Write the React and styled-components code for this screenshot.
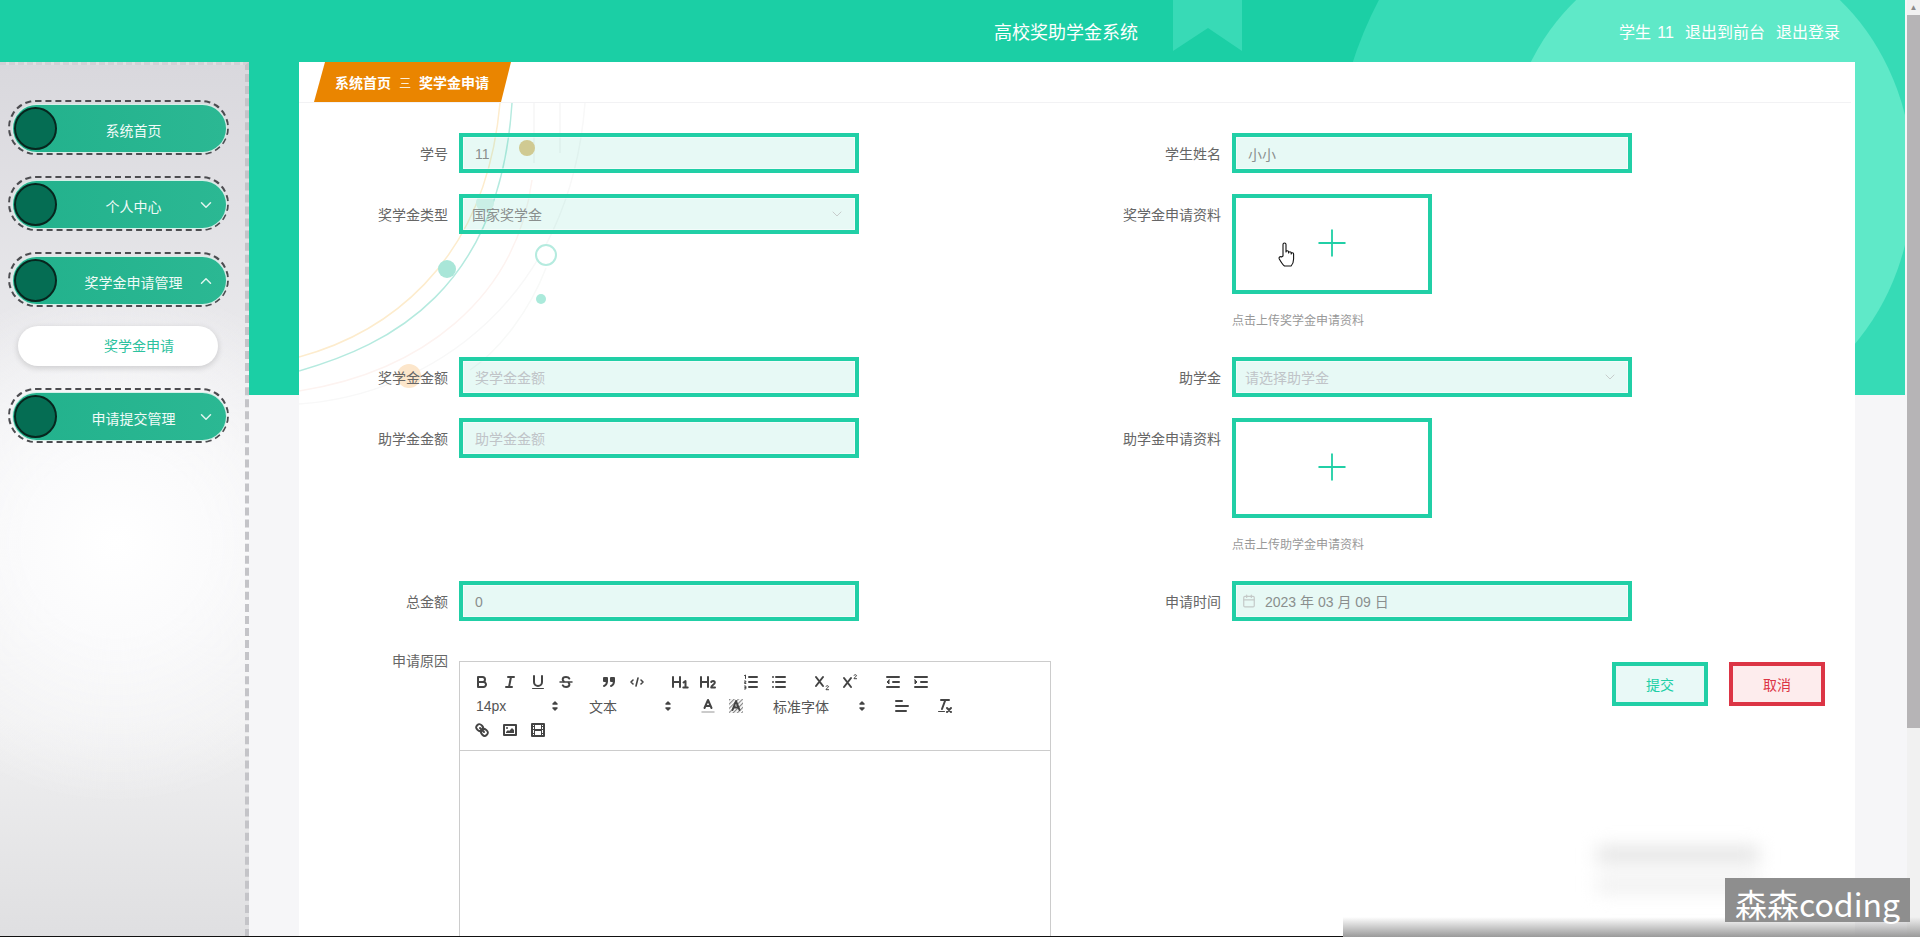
import React from 'react'
import styled, { createGlobalStyle } from 'styled-components'
import { ChevronDown, ChevronUp, Calendar, Plus } from 'lucide-react'

const green = '#21cfa6'
const sans = '"Liberation Sans", "Noto Sans CJK SC", sans-serif'

const GlobalStyle = createGlobalStyle`
  html, body {
    margin: 0;
    padding: 0;
    overflow: hidden;
  }
  * {
    box-sizing: border-box;
  }
`

const Page = styled.div`
  position: relative;
  display: flex;
  width: 1920px;
  height: 937px;
  overflow: hidden;
  background: #f6f6f8;
  font-family: ${sans};
`

const Viewport = styled.div`
  position: relative;
  width: 1905px;
  height: 937px;
`

const BannerArt = styled.svg`
  position: absolute;
  top: 0;
  left: 0;
`

const Header = styled.header`
  position: relative;
  display: flex;
  align-items: center;
  justify-content: space-between;
  height: 62px;
  padding: 0 65px 0 994px;
  color: #fff;
`

const Title = styled.div`
  font-size: 18px;
`

const UserLinks = styled.div`
  display: flex;
  gap: 11px;
  font-size: 16px;
  word-spacing: 2px;
`

const Body = styled.div`
  position: relative;
  display: flex;
  height: 875px;
`

const Sidebar = styled.aside`
  width: 249px;
  padding-top: 35px;
  border-top: 3px dashed #d2d1d6;
  border-right: 4px dashed #c4c4c8;
  background:
    radial-gradient(circle at 116px 478px, #fff 0, #fbfbfc 90px, rgba(255, 255, 255, 0) 260px),
    linear-gradient(#d9d8dd 0, #f0f0f2 45%, #f0f0f1 75%, #dfdfe1 100%);
`

const Nav = styled.nav`
  display: flex;
  flex-direction: column;
  gap: 21px;
`

const MenuFrame = styled.div`
  width: 221px;
  height: 55px;
  margin-left: 8px;
  padding: 3px 1px 1px 3px;
  border: 2px dashed #4c4c50;
  border-radius: 28px;
`

const MenuPill = styled.div`
  position: relative;
  display: flex;
  align-items: center;
  justify-content: center;
  height: 47px;
  padding: 2px 15px 0 43px;
  border-radius: 24px;
  background: linear-gradient(90deg, #22b18c, #2bb893);
  box-shadow: 0 0 0 1px #d4f0e8;
  color: #f1fbf8;
  font-size: 14px;
`

const MenuDot = styled.span`
  position: absolute;
  top: 2px;
  left: 1px;
  width: 43px;
  height: 43px;
  border: 2px solid #07261e;
  border-radius: 50%;
  background: #056d53;
`

const MenuArrow = styled.span`
  position: absolute;
  top: 15px;
  right: 11px;
  display: flex;
  color: #dff5ee;
`

const SubItem = styled.div`
  display: flex;
  align-items: center;
  width: 200px;
  height: 40px;
  margin: -2px 0 1px 18px;
  padding: 0 0 2px 86px;
  border-radius: 20px;
  background: #fff;
  box-shadow: 0 2px 6px rgba(0, 0, 0, 0.16);
  color: #2cc29e;
  font-size: 14px;
`

const Main = styled.main`
  flex: 1;
  padding: 0 50px;
`

const Panel = styled.section`
  position: relative;
  height: 875px;
  overflow: hidden;
  background: #fff;
`

const PanelArt = styled.svg`
  position: absolute;
  top: 0;
  left: 0;
`

const CrumbBar = styled.div`
  position: relative;
  height: 41px;
  margin-right: 4px;
  padding-left: 15px;
  border-bottom: 1px solid #f2f2f4;
`

const Crumbs = styled.div`
  display: flex;
  align-items: center;
  gap: 8px;
  width: 197px;
  height: 40px;
  padding-left: 21px;
  background: #ea8500;
  clip-path: polygon(11px 0, 100% 0, 187px 100%, 0 100%);
  color: #fff;
  font-size: 14px;
  font-weight: 700;
`

const CrumbSep = styled.span`
  width: 12px;
  font-size: 12px;
  font-weight: 400;
  opacity: 0.85;
`

const Form = styled.form`
  position: relative;
  display: grid;
  grid-template-columns: 773px 773px;
  row-gap: 21px;
  padding-top: 30px;
`

const Field = styled.div`
  display: flex;
  gap: 11px;
  margin-top: ${p => p.$top || 0}px;
`

const Label = styled.label`
  flex: none;
  width: 149px;
  height: ${p => (p.$top ? 20 : 40)}px;
  margin-top: ${p => (p.$top ? -10 : 0)}px;
  color: #666;
  font-size: 14px;
  line-height: ${p => (p.$top ? 20 : 42)}px;
  text-align: right;
`

const TextBox = styled.input`
  width: 400px;
  height: 40px;
  padding: 1px 12px 0;
  border: 4px solid ${green};
  border-radius: 0;
  outline: none;
  background: rgba(38, 196, 165, 0.11);
  box-shadow: inset 0 0 0 1px rgba(255, 255, 255, 0.5);
  color: #8a8f8e;
  font-family: ${sans};
  font-size: 14px;
  &::placeholder {
    color: #c0c4c8;
  }
`

const SelectBox = styled.div`
  display: flex;
  align-items: center;
  justify-content: space-between;
  width: 400px;
  height: 40px;
  padding: 0 10px 0 9px;
  border: 4px solid ${green};
  background: rgba(38, 196, 165, 0.11);
  box-shadow: inset 0 0 0 1px rgba(255, 255, 255, 0.5);
  color: ${p => (p.$placeholder ? '#c0c4c8' : '#8a8f8e')};
  font-size: 14px;
`

const DateBox = styled(SelectBox)`
  justify-content: flex-start;
  gap: 9px;
  padding-left: 6px;
  color: #8a8f8e;
`

const UploadColumn = styled.div`
  display: flex;
  flex-direction: column;
`

const UploadBox = styled.div`
  display: flex;
  align-items: center;
  justify-content: center;
  width: 200px;
  height: 100px;
  padding-bottom: 2px;
  border: 4px solid ${green};
  background: #fff;
  color: ${green};
`

const Hint = styled.div`
  height: 42px;
  padding-top: 18px;
  color: #999;
  font-size: 12px;
  line-height: 18px;
`

const Actions = styled.div`
  display: flex;
  justify-content: flex-end;
  gap: 21px;
  margin-top: 20px;
  padding-right: 20px;
`

const ActionButton = styled.button`
  width: 96px;
  height: 44px;
  border: 4px solid ${p => (p.$danger ? '#dc3545' : green)};
  border-radius: 0;
  background: ${p => (p.$danger ? '#fdeced' : '#e9f9f7')};
  color: ${p => (p.$danger ? '#dc3545' : green)};
  font-family: ${sans};
  font-size: 14px;
`

const Editor = styled.div`
  width: 592px;
  height: 420px;
  border: 1px solid #ccc;
  background: #fff;
`

const Toolbar = styled.div`
  display: flex;
  flex-wrap: wrap;
  padding: 8px;
  border-bottom: 1px solid #ccc;
`

const ToolGroup = styled.span`
  display: flex;
  margin-right: 15px;
`

const ToolButton = styled.span`
  display: flex;
  align-items: center;
  justify-content: center;
  width: 28px;
  height: 24px;
`

const Picker = styled.span`
  display: flex;
  align-items: center;
  justify-content: space-between;
  width: ${p => p.$width}px;
  height: 24px;
  padding: 0 2px 0 8px;
  color: #555;
  font-size: 14px;
`

const ToolIcon = styled.svg`
  display: block;
  width: 18px;
  height: 18px;
  fill: none;
  stroke: #444;
  stroke-width: 2;
  stroke-linecap: round;
  stroke-linejoin: round;
  .thin {
    stroke-width: 1;
  }
  .solid {
    fill: #444;
    stroke: none;
  }
  .filled {
    fill: #444;
  }
`

const Smudge = styled.div`
  position: absolute;
  right: 96px;
  bottom: 44px;
  display: flex;
  flex-direction: column;
  gap: 14px;
  width: 162px;
  filter: blur(9px);
`

const SmudgeLine = styled.div`
  height: 16px;
  background: ${p => p.$shade};
`

const WatermarkText = styled.div`
  position: absolute;
  top: 878px;
  right: 10px;
  width: 185px;
  height: 44px;
  background: #8e8e8e;
  color: #fff;
  font-family: "Noto Sans CJK SC", "Noto Sans", sans-serif;
  font-size: 32px;
  line-height: 50px;
  text-align: center;
  white-space: nowrap;
`

const BottomFade = styled.div`
  position: absolute;
  top: 917px;
  left: 1343px;
  right: 0;
  height: 20px;
  background: linear-gradient(rgba(130, 130, 130, 0), #9a9a9a);
`

const BlackLine = styled.div`
  position: absolute;
  bottom: 0;
  left: 0;
  width: 1343px;
  height: 1px;
  background: #111;
`

const HandCursor = styled.svg`
  position: absolute;
  top: 242px;
  left: 1278px;
`

const Scrollbar = styled.div`
  display: flex;
  flex-direction: column;
  width: 15px;
  border-left: 2px solid #f6f6f8;
  background: #f1f1f1;
`

const ScrollUp = styled.div`
  display: flex;
  align-items: center;
  justify-content: center;
  height: 15px;
  color: #8a8a8a;
  font-size: 8px;
  line-height: 15px;
`

const ScrollThumb = styled.div`
  height: 713px;
  background: #b6b4b6;
`

const Banner = () => (
  <BannerArt width="1905" height="395" viewBox="0 0 1905 395">
    <rect width="1905" height="395" fill="#1bcfa5" />
    <circle cx="1733" cy="186" r="400" fill="#36dbb6" />
    <ellipse cx="1708" cy="180" rx="205" ry="235" fill="#5fe9c8" />
    <path d="M1173 0h69v51l-34-23-35 23z" fill="#38dab6" />
  </BannerArt>
)

const PanelDecor = () => (
  <PanelArt width="1556" height="875" viewBox="299 62 1556 875">
    <g fill="none" strokeWidth="1.5">
      <path d="M299 371C390 345 500 290 512 103" stroke="#b5eadf" />
      <path d="M299 357C380 335 485 270 500 103" stroke="#fdeccd" />
      <path d="M299 391C420 372 516 300 532 180" stroke="#fdf3f0" />
      <path d="M299 404C430 395 570 300 585 103" stroke="#f8f8f8" />
      <path d="M534 103v60M560 103v50" stroke="#f6f6f6" />
      <path d="M546 268C530 310 500 350 470 370" stroke="#f8f9f8" />
    </g>
    <circle cx="527" cy="148" r="8" fill="#e6cb90" />
    <circle cx="485" cy="203" r="9" fill="#dff4ef" />
    <circle cx="447" cy="269" r="9" fill="#a9e6d8" />
    <circle cx="546" cy="255" r="10" fill="#fff" stroke="#b5ebdf" strokeWidth="2" />
    <circle cx="541" cy="299" r="5" fill="#abeadb" />
    <circle cx="409" cy="376" r="12" fill="#fce6cb" />
  </PanelArt>
)

const icons = {
  bold: (
    <>
      <path d="M5 4h4.5A2.5 2.5 0 0 1 12 6.500v0A2.500 2.500 0 0 1 9.500 9H5V4Z" />
      <path d="M5 9h5.500A2.500 2.500 0 0 1 13 11.500v0A2.500 2.500 0 0 1 10.500 14H5V9Z" />
    </>
  ),
  italic: <path d="M7 4h6M5 14h6M8 14l2-10" />,
  underline: (
    <>
      <path d="M5 3v6a4 4 0 0 0 8 0V3" />
      <rect className="solid" x="3" y="15" width="12" height="1" rx="0.5" />
    </>
  ),
  strike: (
    <>
      <path d="M3 9h12" strokeWidth="1.500" />
      <path d="M12.300 5.500C11.800 4.500 10.600 4 9 4 7 4 5.700 5 5.700 6.400c0 .8.400 1.500 1.100 2M5.800 12.300C6.300 13.400 7.500 14 9.100 14c2 0 3.300-1 3.300-2.400 0-.8-.3-1.300-.8-1.800" strokeWidth="2" />
    </>
  ),
  quote: (
    <>
      <rect className="filled" x="4" y="5" width="3" height="3" />
      <rect className="filled" x="11" y="5" width="3" height="3" />
      <path d="M7 8c0 4-3 5-3 5M14 8c0 4-3 5-3 5" />
    </>
  ),
  code: <path d="M5 7 3 9l2 2M13 7l2 2-2 2M10 5 8 13" strokeWidth="1.600" />,
  h1: <path d="M2 4v10M9 4v10M2 9h7M12.500 9.500 14.500 8v6.500M12.300 14.500h4.400" />,
  h2: <path d="M2 4v10M9 4v10M2 9h7M12.200 9c.3-.7 1-1 1.800-1 1.100 0 1.800.7 1.800 1.700 0 1.700-3.600 2.500-3.600 4.800h3.800" />,
  ordered: (
    <>
      <path d="M7 4h8M7 9h8M7 14h8" />
      <path d="M2.500 2.500 3.500 2v3.500M2.500 8h1.300v1.300H2.600v1.200h1.300M2.500 13h1.300v3H2.500M2.800 14.500h1" className="thin" strokeWidth="0.800" />
    </>
  ),
  bullet: <path d="M6 4h9M6 9h9M6 14h9M3 4h0M3 9h0M3 14h0" />,
  sub: (
    <>
      <path d="m3 4 7 9M10 4l-7 9" />
      <path d="M13 13.500c.3-.6.800-.8 1.300-.8.700 0 1.200.4 1.200 1 0 1-2.500 1.500-2.500 3h2.600" className="thin" />
    </>
  ),
  sup: (
    <>
      <path d="m3 5 7 9M10 5l-7 9" />
      <path d="M13 2.500c.3-.6.800-.8 1.300-.8.700 0 1.200.4 1.200 1 0 1-2.500 1.500-2.500 3h2.600" className="thin" />
    </>
  ),
  outdent: (
    <>
      <path d="M3 14h12M3 4h12M9 9h6" />
      <path className="filled" d="M5 7v4L3 9l2-2Z" strokeWidth="1" />
    </>
  ),
  indent: (
    <>
      <path d="M3 14h12M3 4h12M9 9h6" />
      <path className="filled" d="M3 7v4l2-2-2-2Z" strokeWidth="1" />
    </>
  ),
  color: (
    <>
      <path d="M5.500 11 9 3l3.500 8M11.630 9H6.380" />
      <path d="M3 15h12" stroke="#bbb" strokeWidth="1.500" />
    </>
  ),
  background: (
    <>
      <rect x="2" y="2" width="14" height="14" fill="url(#hatch)" stroke="none" />
      <path d="M5.500 13 9 4l3.500 9M11.630 10.500H6.380" />
    </>
  ),
  align: <path d="M3 9h12M3 14h10M3 4h6" />,
  clean: (
    <>
      <path d="M5 3h8M6 12l3.350-9M11 11l4 4M15 11l-4 4" />
      <rect className="solid" x="2" y="14" width="7" height="1" rx="0.5" />
    </>
  ),
  link: (
    <>
      <path d="m7 7 4 4" />
      <path d="M8.900 4.577a3.476 3.476 0 0 1 .36 4.679A3.476 3.476 0 0 1 4.577 8.900C3.185 7.500 2.035 6.400 4.217 4.217S7.500 3.185 8.900 4.577Z" />
      <path d="M13.423 9.100a3.476 3.476 0 0 0-4.679-.36 3.476 3.476 0 0 0 .36 4.679c1.392 1.392 2.500 2.542 4.679.36s1.032-3.287-.36-4.679Z" />
    </>
  ),
  image: (
    <>
      <rect x="3" y="4" width="12" height="10" />
      <circle className="solid" cx="6" cy="7" r="1" />
      <path className="solid" d="M5 12v-1l2-2 1 1 3-3 2 2v3H5Z" />
    </>
  ),
  video: (
    <>
      <rect x="3" y="3" width="12" height="12" />
      <path className="solid" d="M5 3h1v12H5zM12 3h1v12h-1zM5 8h8v2H5zM3 5h3v1H3zM3 8h2v1H3zM3 12h3v1H3zM12 5h3v1h-3zM13 8h2v1h-2zM12 12h3v1h-3z" />
    </>
  ),
  updown: (
    <path className="filled" d="M7 11l2 2 2-2H7ZM7 7l2-2 2 2H7Z" strokeWidth="1.500" />
  ),
}

const Icon = ({ name }) => <ToolIcon viewBox="0 0 18 18">{icons[name]}</ToolIcon>

const toolRows = [
  ['bold', 'italic', 'underline', 'strike'],
  ['quote', 'code'],
  ['h1', 'h2'],
  ['ordered', 'bullet'],
  ['sub', 'sup'],
  ['outdent', 'indent'],
  [{ text: '14px', width: 98 }],
  [{ text: '文本', width: 98 }],
  ['color', 'background'],
  [{ text: '标准字体', width: 108 }],
  ['align'],
  ['clean'],
  ['link', 'image', 'video'],
]

const EditorToolbar = () => (
  <Toolbar>
    <svg width="0" height="0" style={{ position: 'absolute' }}>
      <defs>
        <pattern id="hatch" width="3" height="3" patternUnits="userSpaceOnUse" patternTransform="rotate(45)">
          <rect width="1.200" height="3" fill="#888" />
        </pattern>
      </defs>
    </svg>
    {toolRows.map((group, i) => (
      <ToolGroup key={i}>
        {group.map(tool =>
          typeof tool === 'string' ? (
            <ToolButton key={tool}>
              <Icon name={tool} />
            </ToolButton>
          ) : (
            <Picker key={tool.text} $width={tool.width}>
              {tool.text}
              <Icon name="updown" />
            </Picker>
          )
        )}
      </ToolGroup>
    ))}
  </Toolbar>
)

const Upload = ({ hint }) => (
  <UploadColumn>
    <UploadBox>
      <Plus size={44} strokeWidth={1} />
    </UploadBox>
    <Hint>{hint}</Hint>
  </UploadColumn>
)

const Menu = ({ title, arrow }) => (
  <MenuFrame>
    <MenuPill>
      <MenuDot />
      {title}
      {arrow && (
        <MenuArrow>
          {arrow === 'up' ? <ChevronUp size={18} /> : <ChevronDown size={18} />}
        </MenuArrow>
      )}
    </MenuPill>
  </MenuFrame>
)

const App = () => {
  return (
    <Page>
      <GlobalStyle />
      <Viewport>
        <Banner />
        <Header>
          <Title>高校奖助学金系统</Title>
          <UserLinks>
            <span>学生 11</span>
            <span>退出到前台</span>
            <span>退出登录</span>
          </UserLinks>
        </Header>
        <Body>
          <Sidebar>
            <Nav>
              <Menu title="系统首页" />
              <Menu title="个人中心" arrow="down" />
              <Menu title="奖学金申请管理" arrow="up" />
              <SubItem>奖学金申请</SubItem>
              <Menu title="申请提交管理" arrow="down" />
            </Nav>
          </Sidebar>
          <Main>
            <Panel>
              <PanelDecor />
              <CrumbBar>
                <Crumbs>
                  <span>系统首页</span>
                  <CrumbSep>三</CrumbSep>
                  <span>奖学金申请</span>
                </Crumbs>
              </CrumbBar>
              <Form>
                <Field>
                  <Label>学号</Label>
                  <TextBox readOnly value="11" />
                </Field>
                <Field>
                  <Label>学生姓名</Label>
                  <TextBox readOnly value="小小" />
                </Field>
                <Field>
                  <Label>奖学金类型</Label>
                  <SelectBox>
                    国家奖学金
                    <ChevronDown size={16} color="#c8cdcc" strokeWidth={1.5} />
                  </SelectBox>
                </Field>
                <Field>
                  <Label>奖学金申请资料</Label>
                  <Upload hint="点击上传奖学金申请资料" />
                </Field>
                <Field>
                  <Label>奖学金金额</Label>
                  <TextBox readOnly placeholder="奖学金金额" />
                </Field>
                <Field>
                  <Label>助学金</Label>
                  <SelectBox $placeholder>
                    请选择助学金
                    <ChevronDown size={16} color="#c8cdcc" strokeWidth={1.5} />
                  </SelectBox>
                </Field>
                <Field>
                  <Label>助学金金额</Label>
                  <TextBox readOnly placeholder="助学金金额" />
                </Field>
                <Field>
                  <Label>助学金申请资料</Label>
                  <Upload hint="点击上传助学金申请资料" />
                </Field>
                <Field>
                  <Label>总金额</Label>
                  <TextBox readOnly value="0" />
                </Field>
                <Field>
                  <Label>申请时间</Label>
                  <DateBox>
                    <Calendar size={14} color="#c4c9c8" />
                    2023 年 03 月 09 日
                  </DateBox>
                </Field>
                <Field $top={19}>
                  <Label $top>申请原因</Label>
                  <Editor>
                    <EditorToolbar />
                  </Editor>
                </Field>
                <Actions>
                  <ActionButton type="button">提交</ActionButton>
                  <ActionButton type="button" $danger>取消</ActionButton>
                </Actions>
              </Form>
              <Smudge>
                <SmudgeLine $shade="#e2e2e2" />
                <SmudgeLine $shade="#efefef" />
              </Smudge>
            </Panel>
          </Main>
        </Body>
        <HandCursor width="18" height="25" viewBox="0 0 18 25" fill="#fff" stroke="#111" strokeWidth="1.1" strokeLinejoin="round">
          <path d="M5 14V2.500a1.500 1.500 0 0 1 3 0V10a1.300 1.300 0 0 1 2.600 0v1a1.300 1.300 0 0 1 2.600 0v1a1.200 1.200 0 0 1 2.400 0v5c0 3-1.200 5.500-2.500 7H6.500C5 23 3 20 1.300 17c-.8-1.600.9-3 2.200-2Z" />
        </HandCursor>
      </Viewport>
      <Scrollbar>
        <ScrollUp>▲</ScrollUp>
        <ScrollThumb />
      </Scrollbar>
      <BottomFade />
      <BlackLine />
      <WatermarkText>森森coding</WatermarkText>
    </Page>
  )
}

export default App
